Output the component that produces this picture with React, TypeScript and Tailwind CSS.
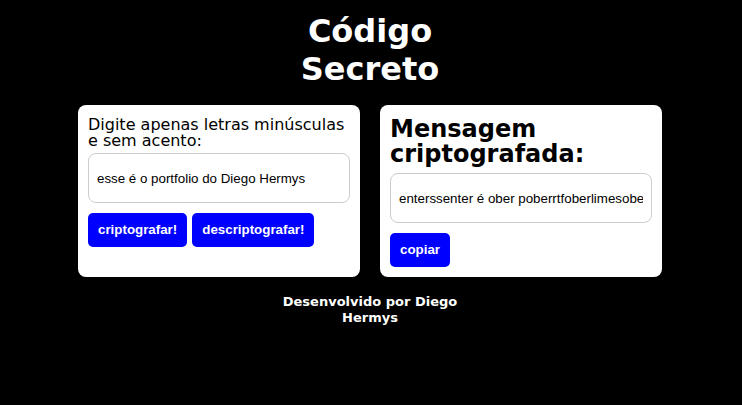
export default function App() {
  return (
    <div className="min-h-screen bg-black flex flex-col items-center pt-[12px] font-['DejaVu_Sans',sans-serif]">
      <h1 className="mr-[2px] w-[200px] text-center text-white text-[32px] font-bold leading-[38px]">
        Código Secreto
      </h1>

      <main className="mt-[17px] mr-[2px] grid grid-cols-2 gap-[20px] w-[584px]">
        {/* entrada */}
        <section className="bg-white rounded-[8px] px-[10px] pt-[12px] pb-[10px]">
          <p className="text-[16px] leading-[16px] text-black">
            Digite apenas letras minúsculas e sem acento:
          </p>
          <input
            readOnly
            value="esse é o portfolio do Diego Hermys"
            className="mt-[4px] block w-full h-[50px] border border-[#cccccc] rounded-[8px] px-[8px] text-[13.33px] text-black font-['Liberation_Sans',Arial,sans-serif] outline-none"
          />
          <div className="mt-[10px] flex gap-[5px]">
            <button className="h-[34px] px-[10px] rounded-[5px] bg-[#0000ff] text-white font-bold text-[13.33px] font-['Liberation_Sans',Arial,sans-serif]">
              criptografar!
            </button>
            <button className="h-[34px] px-[10px] rounded-[5px] bg-[#0000ff] text-white font-bold text-[13.33px] font-['Liberation_Sans',Arial,sans-serif]">
              descriptografar!
            </button>
          </div>
        </section>

        {/* saida */}
        <section className="bg-white rounded-[8px] px-[10px] pt-[12px] pb-[10px]">
          <h2 className="text-[24px] leading-[25px] font-bold text-black">
            Mensagem criptografada:
          </h2>
          <input
            readOnly
            value="enterssenter é ober poberrtfoberlimesober dober Dimesegober Hentermys"
            className="mt-[6px] block w-full h-[50px] border border-[#cccccc] rounded-[8px] px-[8px] text-[13.33px] text-black font-['Liberation_Sans',Arial,sans-serif] outline-none"
          />
          <div className="mt-[10px] flex">
            <button className="h-[34px] px-[10px] rounded-[5px] bg-[#0000ff] text-white font-bold text-[13.33px] font-['Liberation_Sans',Arial,sans-serif]">
              copiar
            </button>
          </div>
        </section>
      </main>

      <footer className="mt-[17px] mr-[2px] w-[200px] text-center text-white font-bold text-[13px] leading-[16px]">
        Desenvolvido por Diego Hermys
      </footer>
    </div>
  );
}
